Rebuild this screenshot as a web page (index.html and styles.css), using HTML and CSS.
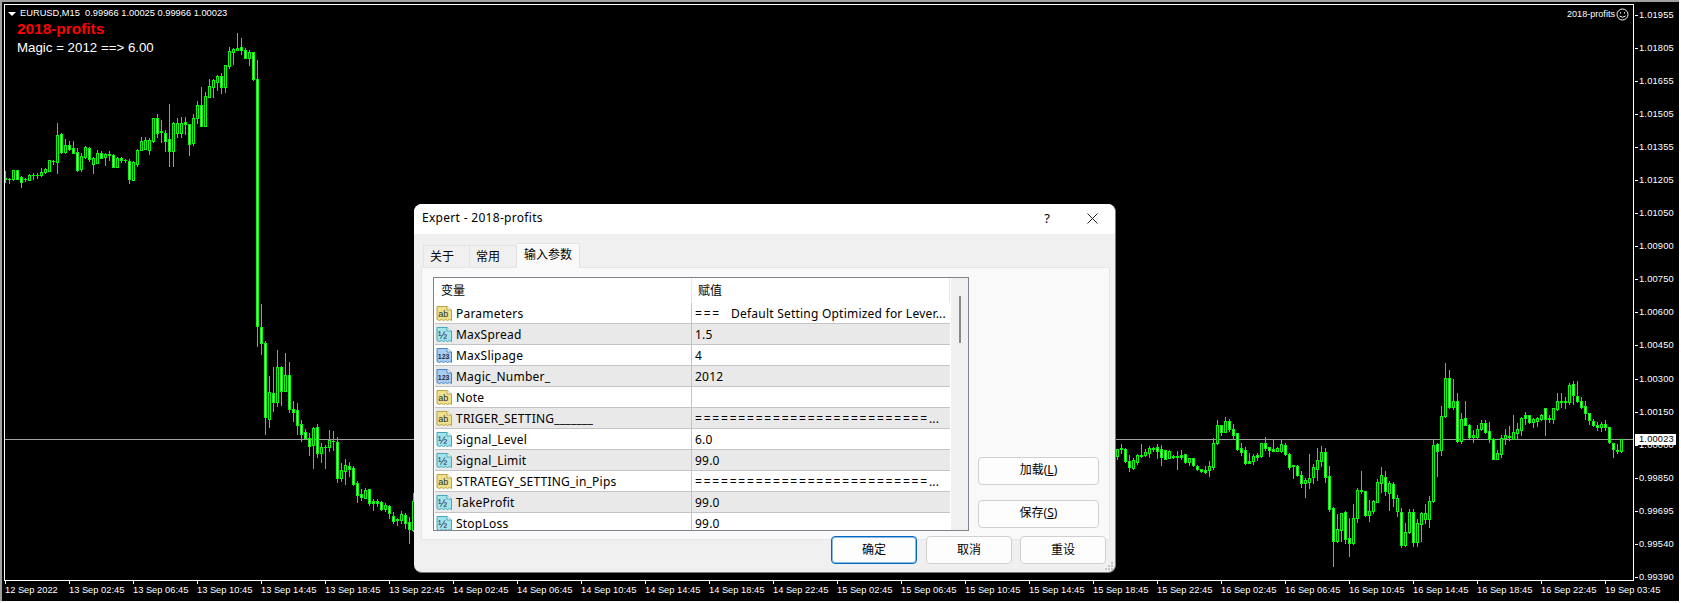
FILE: index.html
```html
<!DOCTYPE html>
<html lang="zh">
<head>
<meta charset="utf-8">
<title>EURUSD,M15 - Expert 2018-profits</title>
<link rel="stylesheet" href="styles.css">
</head>
<body>
<svg class="defs" width="0" height="0" aria-hidden="true">
  <symbol id="doc-str" viewBox="0 0 17 17">
    <path class="doc doc-y" d="M1 1.5H11L15.5 5V15.5L13.5 14.5 11.5 15.5 9.500 14.500 7.500 15.500 5.500 14.500 3.500 15.500 1 14.500Z"/>
    <path class="fold-y" d="M11 1.500V5H15.500"/>
  </symbol>
  <symbol id="doc-dbl" viewBox="0 0 17 17">
    <path class="doc doc-t2" d="M1 1.5H11L15.5 5V15.5L13.5 14.5 11.5 15.5 9.500 14.500 7.500 15.500 5.500 14.500 3.500 15.500 1 14.500Z"/>
    <path class="fold-t" d="M11 1.500V5H15.500"/>
  </symbol>
  <symbol id="doc-int" viewBox="0 0 17 17">
    <path class="doc doc-b" d="M1 1.5H11L15.5 5V15.5L13.5 14.5 11.5 15.5 9.500 14.500 7.500 15.500 5.500 14.500 3.500 15.500 1 14.500Z"/>
    <path class="fold-b" d="M11 1.500V5H15.500"/>
  </symbol>
</svg>

<main class="terminal">
  <div class="chart">
    <div class="plot">
      <svg id="candles" class="candles" viewBox="5 5 1628 575" width="1628" height="575"></svg>
      <div class="legend">
        <span class="drop"></span>
        <span class="ohlc">EURUSD,M15  0.99966 1.00025 0.99966 1.00023</span>
      </div>
      <div class="ea-name">2018-profits</div>
      <div class="ea-magic">Magic = 2012 ==&gt; 6.00</div>
      <div class="ea-badge">
        <span>2018-profits</span>
        <svg class="smile" viewBox="0 0 13 13" width="13" height="13">
          <circle cx="6.500" cy="6.500" r="5.500"/>
          <path d="M3.500 8Q6.500 10.500 9.500 8"/>
          <path d="M4.500 4.200V5.500M8.500 4.200V5.500"/>
        </svg>
      </div>
    </div>
    <div class="price-axis">
      <span>1.01955</span><span>1.01805</span><span>1.01655</span><span>1.01505</span><span>1.01355</span><span>1.01205</span>
      <span>1.01050</span><span>1.00900</span><span>1.00750</span><span>1.00600</span><span>1.00450</span><span>1.00300</span>
      <span>1.00150</span><span>1.00000</span><span>0.99850</span><span>0.99695</span><span>0.99540</span><span>0.99390</span>
      <b class="price-tag">1.00023</b>
    </div>
    <div class="time-axis">
      <span>12 Sep 2022</span><span>13 Sep 02:45</span><span>13 Sep 06:45</span><span>13 Sep 10:45</span><span>13 Sep 14:45</span><span>13 Sep 18:45</span><span>13 Sep 22:45</span>
      <span>14 Sep 02:45</span><span>14 Sep 06:45</span><span>14 Sep 10:45</span><span>14 Sep 14:45</span><span>14 Sep 18:45</span><span>14 Sep 22:45</span>
      <span>15 Sep 02:45</span><span>15 Sep 06:45</span><span>15 Sep 10:45</span><span>15 Sep 14:45</span><span>15 Sep 18:45</span><span>15 Sep 22:45</span>
      <span>16 Sep 02:45</span><span>16 Sep 06:45</span><span>16 Sep 10:45</span><span>16 Sep 14:45</span><span>16 Sep 18:45</span><span>16 Sep 22:45</span>
      <span>19 Sep 03:45</span>
    </div>
  </div>
</main>

<section class="dialog">
  <header class="titlebar">
    <span class="title">Expert - 2018-profits</span>
    <span class="help">?</span>
    <svg class="close" viewBox="0 0 11 11" width="11" height="11"><path d="M.5.500L10.500 10.500M10.500.500L.5 10.500"/></svg>
  </header>
  <div class="dlg-body">
    <nav class="tabs">
      <span class="tab">关于</span>
      <span class="tab">常用</span>
      <span class="tab tab-on">输入参数</span>
    </nav>
    <div class="page">
      <div class="list">
        <div class="table">
          <div class="thead"><span>变量</span><span>赋值</span></div>
          <div class="row"><span class="name"><svg class="ico" viewBox="0 0 17 17"><use href="#doc-str"/><text class="doc-t" x="2.300" y="12" font-size="9">ab</text></svg>Parameters</span><span class="val"><i class="eq">===</i>   Default Setting Optimized for Lever...</span></div>
          <div class="row alt"><span class="name"><svg class="ico" viewBox="0 0 17 17"><use href="#doc-dbl"/><text class="doc-t" x="2" y="12.500" font-size="11">½</text></svg>MaxSpread</span><span class="val">1.5</span></div>
          <div class="row"><span class="name"><svg class="ico" viewBox="0 0 17 17"><use href="#doc-int"/><text class="doc-t doc-bold" x="1.800" y="11.500" font-size="7">123</text></svg>MaxSlipage</span><span class="val">4</span></div>
          <div class="row alt"><span class="name"><svg class="ico" viewBox="0 0 17 17"><use href="#doc-int"/><text class="doc-t doc-bold" x="1.800" y="11.500" font-size="7">123</text></svg>Magic_Number_</span><span class="val">2012</span></div>
          <div class="row"><span class="name"><svg class="ico" viewBox="0 0 17 17"><use href="#doc-str"/><text class="doc-t" x="2.300" y="12" font-size="9">ab</text></svg>Note</span><span class="val"></span></div>
          <div class="row alt"><span class="name"><svg class="ico" viewBox="0 0 17 17"><use href="#doc-str"/><text class="doc-t" x="2.300" y="12" font-size="9">ab</text></svg>TRIGER_SETTING_______</span><span class="val"><i class="eq">===========================</i>...</span></div>
          <div class="row"><span class="name"><svg class="ico" viewBox="0 0 17 17"><use href="#doc-dbl"/><text class="doc-t" x="2" y="12.500" font-size="11">½</text></svg>Signal_Level</span><span class="val">6.0</span></div>
          <div class="row alt"><span class="name"><svg class="ico" viewBox="0 0 17 17"><use href="#doc-dbl"/><text class="doc-t" x="2" y="12.500" font-size="11">½</text></svg>Signal_Limit</span><span class="val">99.0</span></div>
          <div class="row"><span class="name"><svg class="ico" viewBox="0 0 17 17"><use href="#doc-str"/><text class="doc-t" x="2.300" y="12" font-size="9">ab</text></svg>STRATEGY_SETTING_in_Pips</span><span class="val"><i class="eq">===========================</i>...</span></div>
          <div class="row alt"><span class="name"><svg class="ico" viewBox="0 0 17 17"><use href="#doc-dbl"/><text class="doc-t" x="2" y="12.500" font-size="11">½</text></svg>TakeProfit</span><span class="val">99.0</span></div>
          <div class="row"><span class="name"><svg class="ico" viewBox="0 0 17 17"><use href="#doc-dbl"/><text class="doc-t" x="2" y="12.500" font-size="11">½</text></svg>StopLoss</span><span class="val">99.0</span></div>
        </div>
        <div class="scrollbar"><span class="thumb"></span></div>
      </div>
      <div class="side">
        <button class="btn btn-side" type="button">加载(<u>L</u>)</button>
        <button class="btn btn-side" type="button">保存(<u>S</u>)</button>
      </div>
    </div>
    <footer class="actions">
      <button class="btn btn-main btn-ok" type="button">确定</button>
      <button class="btn btn-main" type="button">取消</button>
      <button class="btn btn-main" type="button">重设</button>
    </footer>
  </div>
  <svg class="grip" viewBox="0 0 9 9" width="9" height="9">
    <path d="M6 0h2v2H6zM3 3h2v2H3zM6 3h2v2H6zM0 6h2v2H0zM3 6h2v2H3zM6 6h2v2H6z"/>
  </svg>
</section>
<script src="chart.js"></script>
</body>
</html>
```

FILE: styles.css
```css
* { box-sizing: border-box; }
html, body { margin: 0; padding: 0; }
body {
  width: 1681px;
  height: 603px;
  overflow: hidden;
  background: #fff;
  position: relative;
  font-family: "Liberation Sans", Arial, sans-serif;
}
.defs { position: absolute; }

/* terminal chart window */
.terminal {
  width: 1679px;
  height: 601px;
  background: #000;
  border-top: 2px solid #a0a0a0;
  border-left: 2px solid #a0a0a0;
  padding: 2px 0 0 2px;
  color: #fff;
  font-size: 9.3px;
}
.chart {
  display: grid;
  grid-template-columns: 1630px 1fr;
  grid-template-rows: 577px 1fr;
}
.plot {
  position: relative;
  border: 1px solid #fff;
}
.candles { display: block; shape-rendering: crispEdges; }

.legend {
  position: absolute;
  left: 3px;
  top: 3px;
  display: flex;
  align-items: center;
  gap: 4px;
  line-height: 11px;
  white-space: pre;
}
.drop {
  width: 0;
  height: 0;
  border-left: 4px solid transparent;
  border-right: 4px solid transparent;
  border-top: 4px solid #fff;
}
.ea-name {
  position: absolute;
  left: 12px;
  top: 15px;
  font-size: 15.400px;
  line-height: 18px;
  font-weight: 700;
  color: #f00;
}
.ea-magic {
  position: absolute;
  left: 12px;
  top: 34px;
  font-size: 13.300px;
  line-height: 18px;
}
.ea-badge {
  position: absolute;
  top: 3px;
  right: 4px;
  display: flex;
  align-items: center;
  gap: 1px;
  font-size: 9.100px;
  line-height: 13px;
}
.smile { fill: none; stroke: #fff; stroke-width: 1; }

/* axes */
.price-axis {
  position: relative;
  height: 579px;
  margin-bottom: -2px;
  padding: 6px 0 0 5px;
  display: flex;
  flex-direction: column;
  justify-content: space-between;
  line-height: 11px;
}
.price-axis span { position: relative; letter-spacing: .02em; }
.price-axis span::before {
  content: "";
  position: absolute;
  left: -4px;
  top: 5px;
  width: 3px;
  height: 1px;
  background: #fff;
}
.price-tag {
  position: absolute;
  left: 1px;
  top: 430px;
  width: 41px;
  height: 11px;
  background: #fff;
  color: #000;
  font-weight: 400;
  padding-left: 4px;
  letter-spacing: .02em;
}
.time-axis {
  grid-column: 1 / 3;
  display: flex;
  padding-left: 1px;
  line-height: 11px;
  white-space: nowrap;
}
.time-axis span {
  position: relative;
  flex: 0 0 64px;
  padding: 4px 0 0;
}
.time-axis span::before {
  content: "";
  position: absolute;
  left: 0;
  top: 0;
  width: 1px;
  height: 3px;
  background: #fff;
}

/* dialog */
.dialog {
  position: absolute;
  left: 414px;
  top: 204px;
  width: 702px;
  height: 369px;
  border-radius: 8px;
  overflow: hidden;
  border-right: 1px solid #7a7a7a;
  border-bottom: 1px solid #7a7a7a;
  background: #f0f0f0;
  color: #000;
  font: 12px/16px "Noto Sans", "Noto Sans CJK SC", sans-serif;
}
.titlebar {
  height: 30px;
  background: #fff;
  display: flex;
  align-items: center;
  padding: 0 17px 2px 8px;
}
.title { flex: 1; letter-spacing: .3px; }
.help { margin-right: 37px; font-size: 13px; }
.close { stroke: #222; stroke-width: 1; fill: none; }

.dlg-body { padding: 9px 0 0 7px; }
.tabs { display: flex; height: 24px; padding-left: 2px; align-items: flex-end; }
.tab {
  width: 47px;
  height: 22px;
  padding-left: 6px;
  line-height: 21px;
  border: 1px solid #e3e3e3;
  border-bottom: 0;
  border-left-width: 0;
}
.tab:first-child { border-left-width: 1px; }
.tab-on {
  width: 63px;
  height: 25px;
  margin-bottom: -1px;
  padding-left: 7px;
  line-height: 21px;
  background: #f9f9f9;
  position: relative;
}
.page {
  width: 689px;
  height: 273px;
  background: #f9f9f9;
  border: 1px solid #e6e6e6;
  padding: 9px 0 0 11px;
  display: flex;
}
.list {
  width: 536px;
  height: 254px;
  background: #fff;
  border: 1px solid #82828c;
  padding-left: 1px;
  display: flex;
  overflow: hidden;
}
.table { width: 515px; flex: none; }
.thead {
  height: 25px;
  display: grid;
  grid-template-columns: 257px 1fr;
  line-height: 25px;
}
.thead span { padding-left: 6px; border-right: 1px solid #e5e5e5; }
.row {
  height: 21px;
  display: grid;
  grid-template-columns: 257px 1fr;
  border-bottom: 1px solid #c4c4c4;
  line-height: 19px;
  white-space: pre;
  letter-spacing: .22px;
}
.alt { background: #e9e9e9; }
.name { display: flex; align-items: center; padding: 1px 0 0 1px; border-right: 1px solid #c4c4c4; }
.val { padding: 1px 0 0 3px; overflow: hidden; }
.eq { font-style: normal; letter-spacing: 1.800px; }
.ico { width: 17px; height: 17px; margin-right: 3px; flex: none; }
.doc { stroke-width: 1; }
.doc-y { fill: #efe08c; stroke: #b9a344; }
.doc-t2 { fill: #a3e3ea; stroke: #44a7b6; }
.doc-b { fill: #a9cdf1; stroke: #4a86c6; }
.fold-y, .fold-t, .fold-b { fill: #fff; stroke-width: 1; }
.fold-y { stroke: #b9a344; }
.fold-t { stroke: #44a7b6; }
.fold-b { stroke: #4a86c6; }
.doc-t { fill: #26303a; font-family: "Liberation Sans", sans-serif; letter-spacing: 0; }
.doc-bold { font-weight: 700; }
.scrollbar {
  width: 17px;
  margin-left: 1px;
  background: #f0f0f0;
  display: flex;
  justify-content: center;
}
.thumb { width: 2px; height: 47px; margin-top: 18px; background: #8a8a8a; }

.side {
  width: 121px;
  margin-left: 9px;
  padding-bottom: 11px;
  display: flex;
  flex-direction: column;
  justify-content: flex-end;
  gap: 15px;
}
.btn {
  height: 28px;
  border: 1px solid #d0d0d0;
  border-radius: 4px;
  background: #fdfdfd;
  color: #000;
  font: inherit;
  padding: 0 0 1px;
}
.btn-side { width: 121px; padding-bottom: 3px; }
.actions {
  margin-top: -4px;
  padding-right: 9px;
  display: flex;
  justify-content: flex-end;
  gap: 8px;
}
.btn-main { width: 86px; }
.btn-ok {
  border-color: #0067c0;
  box-shadow: inset 0 0 0 1px rgba(0, 103, 192, .45);
  margin-right: 1px;
}
.grip {
  position: absolute;
  right: 1px;
  bottom: 1px;
  fill: #c4c4c4;
}
```

FILE: chart.js
```js
// [wickTop, bodyTop, bodyBottom, wickBottom, filled]
var LEFT = [
[171,178,179,182,1],[178,179,179,183,1],[170,170,179,180,0],[170,170,179,179,1],[176,177,182,187,1],[178,179,179,181,1],[174,175,180,180,0],[173,175,175,179,1],[173,175,175,178,1],[168,172,175,176,0],[168,169,172,173,0],[160,160,171,171,0],[160,161,161,164,1],
[123,135,162,173,0],[133,134,152,153,1],[139,145,152,153,0],[141,145,149,150,1],[141,148,153,153,1],[148,152,170,171,1],[153,156,169,171,0],[146,147,157,158,0],[147,148,159,161,1],[157,158,164,173,0],[150,153,163,163,0],[151,153,158,158,1],[153,154,157,165,0],
[151,154,155,160,1],[154,155,167,167,1],[157,158,167,167,0],[157,158,160,162,1],[159,160,160,162,1],[159,161,179,183,1],[161,162,180,180,0],[149,150,164,166,0],[137,141,150,150,0],[137,140,149,149,0],[138,140,150,154,0],[118,118,141,142,0],[114,118,133,137,1],
[120,131,132,142,1],[130,133,141,151,1],[104,139,151,166,1],[122,123,151,166,0],[118,123,133,137,0],[117,123,133,137,0],[117,122,124,134,1],[124,124,144,155,1],[114,118,143,145,0],[101,105,118,123,0],[87,105,126,126,1],[92,96,126,126,0],[79,86,97,97,0],
[79,80,87,97,0],[75,76,82,90,0],[73,76,87,93,1],[65,65,87,92,0],[47,51,66,68,0],[48,49,52,64,0],[33,48,50,50,0],[38,47,50,54,1],[48,50,58,58,1],[50,52,58,65,0],[52,52,79,80,1],[60,79,326,346,1],
[304,327,343,354,1],[341,343,417,434,1],[376,392,419,427,0],[367,393,402,411,1],[350,367,402,406,0],[366,367,391,405,1],[353,375,391,391,0],[362,375,409,412,1],[401,409,412,421,1],[403,410,425,434,1],[420,424,434,441,1],[429,432,438,439,1],[433,438,446,455,1],
[427,428,445,468,0],[424,427,453,457,1],[443,447,453,462,0],[445,447,447,468,1],[430,440,447,451,0],[431,441,441,450,1],[437,442,478,482,1],[463,470,478,481,0],[459,465,471,484,0],[462,466,469,476,1],[466,468,484,485,1],[481,483,495,502,1],[489,494,497,500,1],
[488,490,498,498,0],[489,489,503,505,1],[499,501,503,510,1],[499,501,503,506,1],[501,502,509,510,1],[503,505,509,511,0],[505,506,513,518,1],[512,516,521,523,1],[518,519,520,525,1],[511,514,520,523,0],[513,515,523,528,1],[517,522,529,543,1],[493,501,530,531,0]
];
var RIGHT = [
[449,449,456,459,0],[444,448,449,453,1],[448,449,461,462,1],[455,461,467,471,1],[458,460,468,469,0],[454,455,462,464,0],[444,455,456,457,1],[449,452,455,456,0],[446,448,453,457,0],[447,448,449,451,1],[444,447,451,458,1],[445,449,457,465,1],[450,450,459,459,1],
[450,451,458,458,0],[455,456,457,458,1],[451,456,457,469,1],[450,455,457,459,1],[454,454,462,463,1],[458,458,462,465,0],[458,458,465,466,1],[465,466,469,470,1],[469,469,471,472,1],[466,470,472,473,1],[461,466,470,476,0],[438,443,467,469,0],[420,425,443,444,0],
[425,425,432,435,1],[417,421,432,432,0],[419,421,429,431,1],[424,429,435,439,1],[433,433,449,450,1],[443,448,452,455,1],[447,450,463,464,1],[453,461,463,463,1],[454,456,461,464,0],[453,455,457,460,1],[443,443,456,457,0],[437,443,448,450,1],[447,447,450,456,1],
[439,449,451,451,1],[447,448,451,451,0],[439,444,451,452,0],[443,445,454,455,1],[453,454,467,469,1],[465,465,466,478,1],[465,466,475,476,1],[471,475,483,487,1],[478,480,483,497,0],[454,478,482,488,0],[464,467,477,483,0],[448,460,469,480,0],[446,452,461,466,0],
[448,452,477,482,1],[466,476,509,511,1],[507,508,541,566,1],[514,529,541,542,0],[513,513,530,541,0],[511,512,539,543,1],[518,538,543,556,1],[504,518,543,544,0],[488,490,518,522,0],[471,490,491,493,1],[491,491,515,516,1],[500,511,515,521,0],[500,501,511,513,0],
[479,482,502,502,0],[467,475,483,492,0],[471,477,491,495,1],[481,483,493,510,0],[482,484,498,506,1],[495,498,511,516,0],[508,512,545,547,1],[523,532,545,546,0],[509,512,532,533,0],[509,512,542,546,1],[519,523,542,546,0],
[512,513,524,541,0],[504,513,519,523,0],[496,501,519,527,0],[439,445,501,502,0],[443,444,451,476,1],[406,416,450,455,0],[363,378,416,417,0],[370,378,407,408,1],[379,401,407,409,0],[393,401,441,442,1],[413,419,441,443,0],[401,418,425,425,1],[424,425,437,438,1],
[430,435,437,442,0],[425,429,437,439,0],[420,423,429,430,0],[420,423,432,433,1],[422,431,439,442,1],[438,439,459,459,1],[450,453,459,459,0],[435,438,454,457,0],[429,435,438,444,0],[426,436,437,440,1],[415,432,439,439,0],[423,429,433,438,0],[417,418,430,435,0],
[412,415,418,424,1],[415,415,422,423,1],[418,419,422,427,0],[417,418,421,426,0],[414,415,419,420,0],[408,408,419,435,1],[415,418,419,422,1],[408,408,419,423,0],[393,401,409,410,0],[393,401,402,407,1],[397,401,402,408,1],[383,385,402,404,0],[381,384,395,404,1],
[381,396,401,402,1],[397,401,407,408,1],[401,406,413,419,1],[413,413,420,424,1],[419,421,425,426,1],[422,425,427,430,1],[422,424,427,431,0],[420,424,427,430,1],[427,427,442,443,1],[443,443,449,457,1],[444,450,451,453,1],[439,439,451,452,0]
];

function candleMarkup(list, startX) {
  return list.map(function (c, i) {
    var x = startX + i * 4;
    var h = c[2] - c[1] + 1;
    var s = '<rect x="' + x + '" y="' + c[0] + '" width="1" height="' + (c[3] - c[0] + 1) + '" fill="#0f0"/>' +
            '<rect x="' + (x - 1) + '" y="' + c[1] + '" width="3" height="' + h + '" fill="#0f0"/>';
    if (h > 2) {
      s += '<rect x="' + x + '" y="' + (c[1] + 1) + '" width="1" height="' + (h - 2) + '" fill="' + (c[4] ? '#fff' : '#000') + '"/>';
    }
    return s;
  }).join('');
}

document.getElementById('candles').innerHTML =
  '<rect x="5" y="439" width="1628" height="1" fill="#a0a0a0"/>' +
  candleMarkup(LEFT, 5) + candleMarkup(RIGHT, 1117);
```
